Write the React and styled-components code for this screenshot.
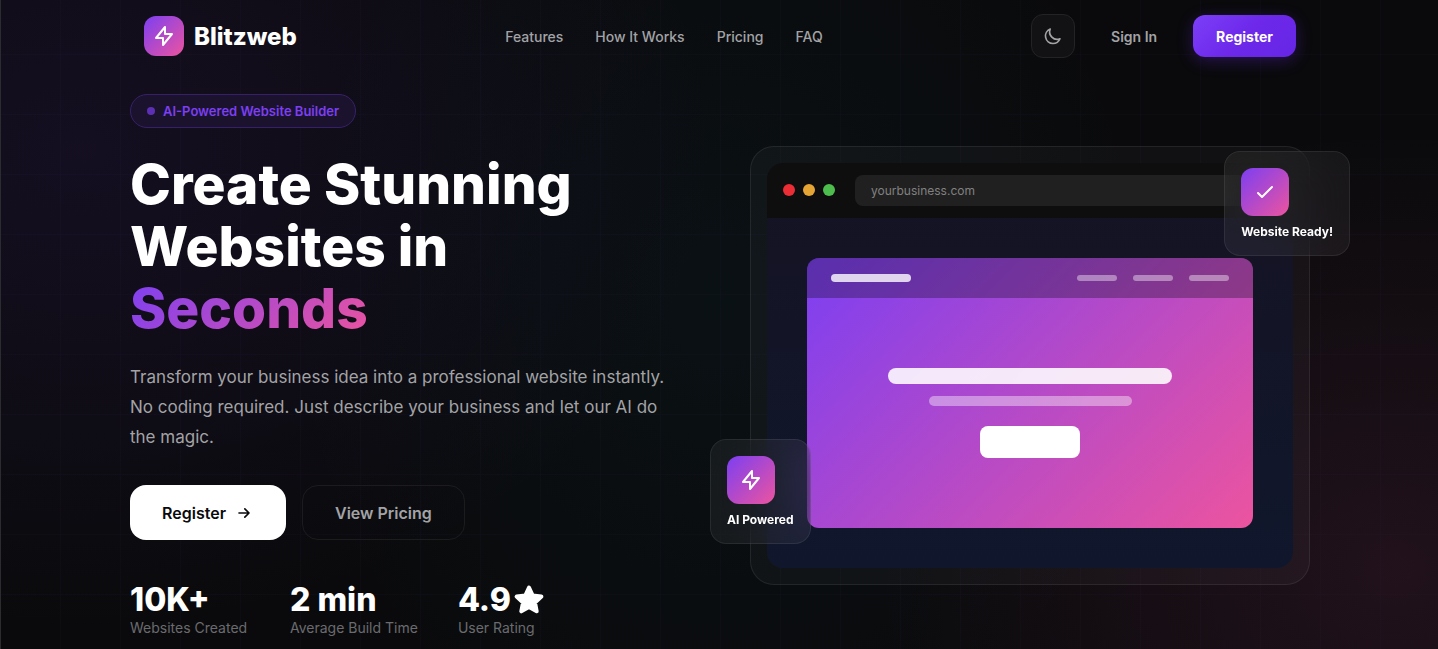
import React from 'react'
import styled, {createGlobalStyle} from 'styled-components'

const GlobalStyle = createGlobalStyle`
  *, *::before, *::after {
    box-sizing: border-box;
  }

  body {
    margin: 0;
    background: #0a0a0c;
    color: #fff;
    font-family: Inter, "Liberation Sans", sans-serif;
    -webkit-font-smoothing: antialiased;
  }
`

const brandGradient = 'linear-gradient(135deg, #7c3ff2 0%, #ec549f 100%)'

const Page = styled.div`
  min-height: 100vh;
  overflow: hidden;
  padding-left: 1px;
  border-left: 1px solid #2c2c30;
  background-color: #0a0a0c;
  background-image:
    linear-gradient(rgba(124, 63, 242, 0.03) 1px, transparent 1px),
    linear-gradient(90deg, rgba(124, 63, 242, 0.03) 1px, transparent 1px),
    radial-gradient(ellipse 640px 480px at 80px 150px, rgba(124, 63, 242, 0.09), transparent),
    radial-gradient(ellipse 440px 520px at 50% 300px, rgba(6, 182, 212, 0.04), transparent),
    radial-gradient(ellipse 520px 440px at 97% 570px, rgba(236, 84, 159, 0.1), transparent);
  background-size: 60px 60px, 60px 60px, auto, auto, auto;
  background-position: -1px 54px, -1px 54px, 0 0, 0 0, 0 0;
`

const Nav = styled.nav`
  display: flex;
  align-items: center;
  justify-content: space-between;
  max-width: 1200px;
  height: 72px;
  margin: 0 auto;
  padding: 0 24px;
`

const Logo = styled.a`
  display: flex;
  align-items: center;
  gap: 10px;
  color: #fff;
  font-size: 24px;
  font-weight: 800;
  text-decoration: none;
`

const IconTile = styled.span`
  display: flex;
  align-items: center;
  justify-content: center;
  width: ${props => props.$size}px;
  height: ${props => props.$size}px;
  border-radius: 12px;
  background: ${brandGradient};
  color: #fff;
`

const NavLinks = styled.div`
  display: flex;
  gap: 32px;
`

const NavLink = styled.a`
  color: #a3a3a6;
  font-size: 14px;
  font-weight: 500;
  text-decoration: none;
`

const NavActions = styled.div`
  display: flex;
  align-items: center;
  gap: 12px;
`

const ThemeToggle = styled.button`
  display: flex;
  align-items: center;
  justify-content: center;
  width: 44px;
  height: 44px;
  padding: 0;
  border: 1px solid #232325;
  border-radius: 12px;
  background: #121214;
  color: #a3a3a6;
`

const SignIn = styled.a`
  padding: 12px 24px;
  color: #a3a3a6;
  font-size: 14px;
  font-weight: 600;
  text-decoration: none;
`

const NavRegister = styled.button`
  height: 42px;
  padding: 0 23px;
  border: 0;
  border-radius: 12px;
  background: linear-gradient(135deg, #7c3ff8, #6d28ea 50%, #6626e4);
  box-shadow: 0 4px 16px rgba(109, 40, 234, 0.3);
  color: #fff;
  font-family: inherit;
  font-size: 14px;
  font-weight: 700;
`

const Hero = styled.main`
  display: grid;
  grid-template-columns: 1fr 1fr;
  align-items: center;
  gap: 60px;
  max-width: 1180px;
  margin: 0 auto;
  padding: 22px 0 12px;
`

const Badge = styled.div`
  display: inline-flex;
  align-items: center;
  gap: 8px;
  height: 34px;
  padding: 0 16px;
  border: 1px solid #37206a;
  border-radius: 17px;
  background: #1b122d;
  color: #7c3ff2;
  font-size: 13px;
  font-weight: 600;
`

const BadgeDot = styled.span`
  width: 8px;
  height: 8px;
  border-radius: 50%;
  background: #5c2fb4;
`

const Title = styled.h1`
  margin: 25px 0 23px;
  font-size: 55px;
  font-weight: 800;
  line-height: 62px;
`

const GradientText = styled.span`
  background: ${brandGradient};
  background-clip: text;
  color: transparent;
`

const Lead = styled.p`
  max-width: 550px;
  margin: 0 0 33px;
  color: #a3a3a6;
  font-size: 17px;
  line-height: 30px;
`

const Buttons = styled.div`
  display: flex;
  gap: 16px;
  margin-bottom: 40px;
`

const HeroButton = styled.button`
  display: flex;
  align-items: center;
  gap: 8px;
  height: 55px;
  padding: 0 32px;
  border: ${props => props.$primary ? '0' : '1px solid #1c1c1f'};
  border-radius: 16px;
  background: ${props => props.$primary ? '#fff' : 'transparent'};
  color: ${props => props.$primary ? '#0a0a0c' : '#a3a3a6'};
  font-family: inherit;
  font-size: 16px;
  font-weight: 600;
`

const Stats = styled.div`
  display: flex;
  gap: 40px;
`

const Stat = styled.div`
  min-width: 120px;
`

const StatValue = styled.div`
  display: flex;
  align-items: center;
  font-size: 32px;
  font-weight: 800;
  line-height: 40px;
`

const StatLabel = styled.div`
  color: #6b6b6f;
  font-size: 14px;
  line-height: 16px;
`

const Showcase = styled.div`
  position: relative;
  padding: 16px;
  border: 1px solid rgba(255, 255, 255, 0.08);
  border-radius: 24px;
  background: rgba(255, 255, 255, 0.03);
`

const Browser = styled.div`
  overflow: hidden;
  border-radius: 16px;
  background: linear-gradient(180deg, #151323, #10172c);
`

const BrowserBar = styled.div`
  display: flex;
  align-items: center;
  gap: 20px;
  padding: 12px 16px;
  background: #0e0e0f;
`

const Dots = styled.div`
  display: flex;
  gap: 8px;
`

const Dot = styled.span`
  width: 12px;
  height: 12px;
  border-radius: 50%;
  background: ${props => props.$color};
`

const Address = styled.div`
  flex: 1;
  padding: 0 16px;
  border-radius: 8px;
  background: #202020;
  color: #818181;
  font-size: 12px;
  line-height: 31px;
`

const BrowserBody = styled.div`
  padding: 40px;
`

const Site = styled.div`
  display: flex;
  flex-direction: column;
  height: 270px;
  overflow: hidden;
  border-radius: 12px;
  background: ${brandGradient};
`

const SiteHeader = styled.div`
  display: flex;
  align-items: center;
  gap: 16px;
  height: 40px;
  padding: 0 24px;
  background: rgba(10, 10, 20, 0.3);
`

const SiteBrand = styled.span`
  width: 80px;
  height: 8px;
  margin-right: auto;
  border-radius: 4px;
  background: rgba(255, 255, 255, 0.8);
`

const SiteLink = styled.span`
  width: 40px;
  height: 6px;
  border-radius: 3px;
  background: rgba(255, 255, 255, 0.4);
`

const SiteHero = styled.div`
  display: flex;
  flex: 1;
  flex-direction: column;
  align-items: center;
  justify-content: center;
  padding: 0 20px;
`

const SiteTitle = styled.span`
  width: 70%;
  height: 16px;
  margin-bottom: 12px;
  border-radius: 8px;
  background: rgba(255, 255, 255, 0.88);
`

const SiteText = styled.span`
  width: 50%;
  height: 10px;
  margin-bottom: 20px;
  border-radius: 5px;
  background: rgba(255, 255, 255, 0.4);
`

const SiteButton = styled.span`
  width: 100px;
  height: 32px;
  border-radius: 8px;
  background: #fff;
`

const FloatingCard = styled.div`
  position: absolute;
  ${props => props.$corner === 'top' ? 'top: 4px; right: -41px;' : 'bottom: 40px; left: -41px;'}
  display: flex;
  flex-direction: column;
  gap: 8px;
  padding: 16px;
  border: 1px solid rgba(255, 255, 255, 0.08);
  border-radius: 16px;
  background: rgba(255, 255, 255, 0.05);
  backdrop-filter: blur(20px);
  font-size: 12px;
  font-weight: 700;
  line-height: 15px;
  white-space: nowrap;
`

function Icon({path, size = 24}) {
  return (
    <svg
      width={size}
      height={size}
      viewBox="0 0 24 24"
      fill="none"
      stroke="currentColor"
      strokeWidth="2"
      strokeLinecap="round"
      strokeLinejoin="round"
      aria-hidden="true"
    >
      <path d={path} />
    </svg>
  )
}

const icons = {
  bolt: 'M13 10V3L4 14h7v7l9-11h-7z',
  moon: 'M20.354 15.354A9 9 0 018.646 3.646 9.003 9.003 0 0012 21a9.003 9.003 0 008.354-5.646z',
  check: 'M5 13l4 4L19 7',
  arrow: 'M13 7l5 5m0 0l-5 5m5-5H6'
}

function Star() {
  return (
    <svg width="34" height="32" viewBox="0 0 34 32" role="img" aria-label="stars">
      <path
        d="M18 3.500l3.700 8 8.700 1-6.400 6 1.700 8.800L18 23l-7.700 4.300 1.700-8.800-6.400-6 8.700-1z"
        fill="#fff"
        stroke="#fff"
        strokeWidth="4"
        strokeLinejoin="round"
      />
    </svg>
  )
}

const stats = [
  {value: '10K+', label: 'Websites Created'},
  {value: '2 min', label: 'Average Build Time'},
  {value: '4.9', label: 'User Rating', star: true}
]

export default function App() {
  return (
    <Page>
      <GlobalStyle />
      <Nav>
        <Logo href="#">
          <IconTile $size={40}><Icon path={icons.bolt} /></IconTile>
          Blitzweb
        </Logo>
        <NavLinks>
          <NavLink href="#features">Features</NavLink>
          <NavLink href="#how">How It Works</NavLink>
          <NavLink href="#pricing">Pricing</NavLink>
          <NavLink href="#faq">FAQ</NavLink>
        </NavLinks>
        <NavActions>
          <ThemeToggle aria-label="Toggle theme"><Icon path={icons.moon} size={20} /></ThemeToggle>
          <SignIn href="#signin">Sign In</SignIn>
          <NavRegister>Register</NavRegister>
        </NavActions>
      </Nav>
      <Hero>
        <div>
          <Badge><BadgeDot />AI-Powered Website Builder</Badge>
          <Title>
            Create Stunning<br />
            Websites in<br />
            <GradientText>Seconds</GradientText>
          </Title>
          <Lead>
            Transform your business idea into a professional website instantly.
            No coding required. Just describe your business and let our AI do
            the magic.
          </Lead>
          <Buttons>
            <HeroButton $primary>Register<Icon path={icons.arrow} size={20} /></HeroButton>
            <HeroButton>View Pricing</HeroButton>
          </Buttons>
          <Stats>
            {stats.map(stat => (
              <Stat key={stat.label}>
                <StatValue>{stat.value}{stat.star && <Star />}</StatValue>
                <StatLabel>{stat.label}</StatLabel>
              </Stat>
            ))}
          </Stats>
        </div>
        <Showcase>
          <Browser>
            <BrowserBar>
              <Dots>
                <Dot $color="#eb2d35" />
                <Dot $color="#e5a534" />
                <Dot $color="#4dbd4d" />
              </Dots>
              <Address>yourbusiness.com</Address>
            </BrowserBar>
            <BrowserBody>
              <Site>
                <SiteHeader>
                  <SiteBrand />
                  <SiteLink />
                  <SiteLink />
                  <SiteLink />
                </SiteHeader>
                <SiteHero>
                  <SiteTitle />
                  <SiteText />
                  <SiteButton />
                </SiteHero>
              </Site>
            </BrowserBody>
          </Browser>
          <FloatingCard $corner="top">
            <IconTile $size={48}><Icon path={icons.check} /></IconTile>
            Website Ready!
          </FloatingCard>
          <FloatingCard $corner="bottom">
            <IconTile $size={48}><Icon path={icons.bolt} /></IconTile>
            AI Powered
          </FloatingCard>
        </Showcase>
      </Hero>
    </Page>
  )
}
